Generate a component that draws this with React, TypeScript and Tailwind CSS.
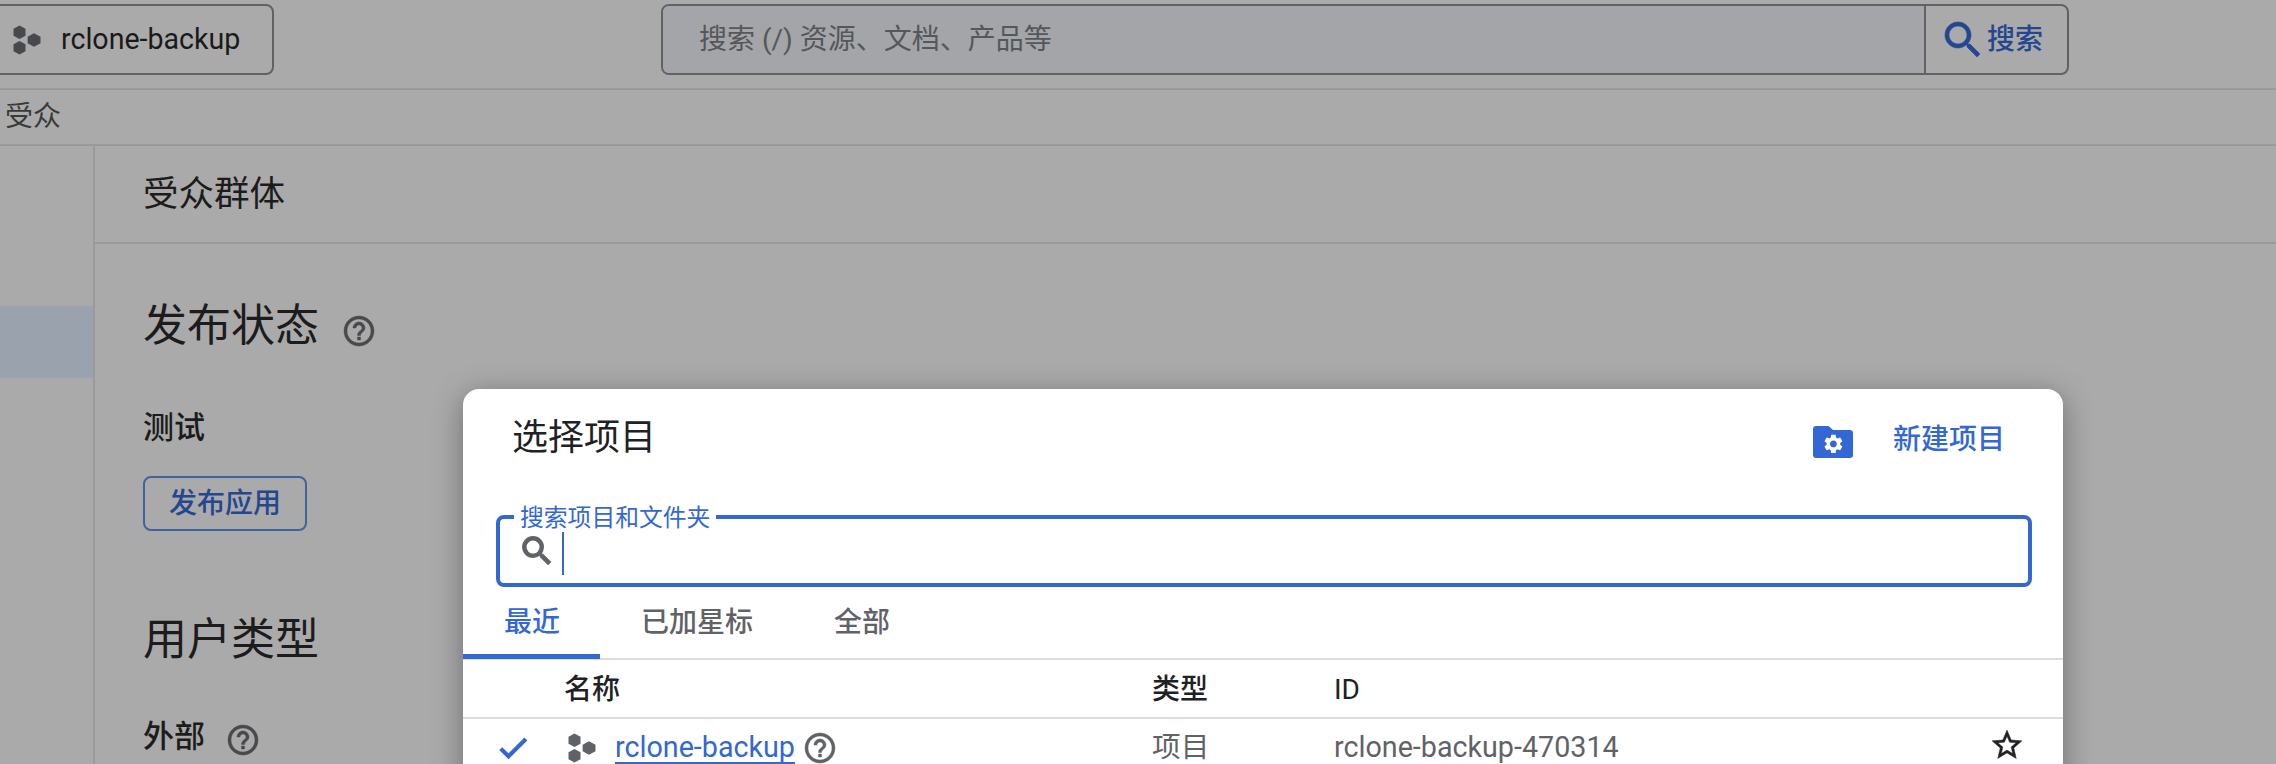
const SEARCH = "M15.5 14h-.79l-.28-.27C15.41 12.59 16 11.11 16 9.5 16 5.91 13.09 3 9.5 3S3 5.91 3 9.5 5.91 16 9.5 16c1.61 0 3.09-.59 4.23-1.57l.27.28v.79l5 4.99L20.49 19l-4.99-5zm-6 0C7.01 14 5 11.99 5 9.5S7.01 5 9.5 5 14 7.01 14 9.5 11.99 14 9.5 14z";
const HELP = "M11 18h2v-2h-2v2zm1-16C6.48 2 2 6.48 2 12s4.48 10 10 10 10-4.48 10-10S17.52 2 12 2zm0 18c-4.41 0-8-3.59-8-8s3.59-8 8-8 8 3.59 8 8-3.59 8-8 8zm0-14c-2.21 0-4 1.79-4 4h2c0-1.1.9-2 2-2s2 .9 2 2c0 2-3 1.75-3 5h2c0-2.25 3-2.5 3-5 0-2.21-1.79-4-4-4z";
const STAR = "M22 9.24l-7.19-.62L12 2 9.19 8.63 2 9.24l5.46 4.73L5.82 21 12 17.27 18.18 21l-1.63-7.03L22 9.24zM12 15.4l-3.76 2.27 1-4.28-3.32-2.88 4.38-.38L12 6.1l1.71 4.04 4.38.38-3.32 2.88 1 4.28L12 15.4z";
const CHECK = "M9 16.17L4.83 12l-1.42 1.41L9 19 21 7l-1.41-1.41z";
const GEAR = "M19.14 12.94c.04-.3.06-.61.06-.94 0-.32-.02-.64-.07-.94l2.03-1.58c.18-.14.23-.41.12-.61l-1.92-3.32c-.12-.22-.37-.29-.59-.22l-2.39.96c-.5-.38-1.03-.7-1.62-.94l-.36-2.54c-.04-.24-.24-.41-.48-.41h-3.84c-.24 0-.43.17-.47.41l-.36 2.54c-.59.24-1.13.57-1.62.94l-2.39-.96c-.22-.08-.47 0-.59.22L2.74 8.87c-.12.21-.08.47.12.61l2.03 1.58c-.05.3-.09.63-.09.94s.02.64.07.94l-2.03 1.58c-.18.14-.23.41-.12.61l1.92 3.32c.12.22.37.29.59.22l2.39-.96c.5.38 1.03.7 1.62.94l.36 2.54c.05.24.24.41.48.41h3.84c.24 0 .44-.17.47-.41l.36-2.54c.59-.24 1.13-.56 1.62-.94l2.39.96c.22.08.47 0 .59-.22l1.92-3.32c.12-.22.07-.47-.12-.61l-2.01-1.58zM12 15.6c-1.98 0-3.6-1.62-3.6-3.6s1.62-3.6 3.6-3.6 3.6 1.62 3.6 3.6-1.62 3.6-3.6 3.6z";

function Icon({ d, className, bold }: { d: string; className: string; bold?: boolean }) {
  return (
    <svg viewBox="0 0 24 24" className={className} fill="currentColor" stroke="currentColor" strokeWidth={bold ? "0.8" : "0.3"}>
      <path d={d} />
    </svg>
  );
}

function Hexes({ className }: { className: string }) {
  return (
    <svg viewBox="0 0 28 28" className={className} fill="currentColor">
      <polygon points="7,0.5 12.6,3.6 12.6,10 7,13.1 1.4,10 1.4,3.6" />
      <polygon points="7,14.9 12.6,18 12.6,24.4 7,27.5 1.4,24.4 1.4,18" />
      <polygon points="20.5,7.7 26.6,11 26.6,17 20.5,20.3 14.6,17 14.6,11" />
    </svg>
  );
}

function FolderGear() {
  return (
    <svg viewBox="0 0 40 32" className="w-[40px] h-[32px] shrink-0">
      <path fill="#3367d6" d="M3 0h12.5l4.5 4h17c1.7 0 3 1.3 3 3v22c0 1.7-1.3 3-3 3H3c-1.7 0-3-1.3-3-3V3C0 1.3 1.3 0 3 0z" />
      <g transform="translate(9 6.5) scale(0.95)">
        <path fill="#ffffff" d={GEAR} />
      </g>
    </svg>
  );
}

export default function App() {
  return (
    <div className="relative w-[2276px] h-[764px] overflow-hidden bg-[#aaaaaa] text-[#1c1c1c] font-['Roboto','Noto_Sans_CJK_SC',sans-serif]">
      <header className="h-[90px] border-b-2 border-[#9a9a9a] flex items-start pt-[4px]">
        <div className="-ml-[10px] w-[284px] h-[71px] border-2 border-[#606265] rounded-[8px] flex items-center pl-[20px] shrink-0">
          <Hexes className="w-[30px] h-[30px] text-[#47494c]" />
          <span className="ml-[19px] text-[28.6px] text-[#1a1a1a]">rclone-backup</span>
        </div>
        <div className="ml-[387px] w-[1408px] h-[71px] border-2 border-[#606265] rounded-[8px] flex overflow-hidden shrink-0">
          <div className="flex-1 bg-[#a3a5a8] flex items-center pl-[36px] text-[28px] text-[#55575a] border-r-2 border-[#606265]">
            搜索 (/) 资源、文档、产品等
          </div>
          <div className="w-[141px] flex items-center pl-[16px] text-[#25478f] text-[28px]">
            <Icon d={SEARCH} className="w-[48px] h-[48px] -ml-[3px] -mr-[3px] shrink-0" />
            <span className="ml-[3px] font-medium">搜索</span>
          </div>
        </div>
      </header>

      <div className="h-[56px] border-b-2 border-[#9a9a9a] flex items-center pl-[5px] text-[28px] text-[#3a3a3a]">
        受众
      </div>

      <div className="flex h-[618px]">
        <aside className="w-[95px] shrink-0 border-r-2 border-[#9a9a9a] pt-[160px]">
          <div className="h-[72px] bg-[#9aa2ae]" />
        </aside>
        <main className="flex-1">
          <div className="h-[98px] border-b-2 border-[#9a9a9a] flex items-center pl-[48px] pt-[2px] text-[35.5px]">
            受众群体
          </div>
          <div className="pl-[48px]">
            <div className="mt-[57px] flex items-center h-[50px]">
              <h2 className="text-[44px] leading-[50px] font-normal">发布状态</h2>
              <Icon d={HELP} className="ml-[22px] mt-[10px] w-[36px] h-[36px] text-[#47494c]" />
            </div>
            <div className="mt-[57px] text-[31px] leading-[40px] font-medium">测试</div>
            <button className="mt-[28px] w-[164px] h-[55px] border-2 border-[#40639f] rounded-[8px] text-[#25478f] text-[28px] font-medium flex items-center justify-center">
              发布应用
            </button>
            <h2 className="mt-[84px] text-[44px] leading-[50px] font-normal">用户类型</h2>
            <div className="mt-[51px] flex items-center">
              <span className="text-[31px] leading-[40px] font-medium">外部</span>
              <Icon d={HELP} className="ml-[20px] mt-[6px] w-[36px] h-[36px] text-[#47494c]" />
            </div>
          </div>
        </main>
      </div>

      <div className="absolute left-[463px] top-[389px] w-[1600px] h-[400px] bg-white rounded-[16px] shadow-[0_6px_30px_rgba(0,0,0,0.35)]">
        <div className="h-[69px] pl-[49px] pr-[58px] flex items-end justify-between">
          <div className="text-[36px] leading-[45px] text-[#202124] translate-y-[3px]">选择项目</div>
          <div className="flex items-center text-[28px] leading-[36px] text-[#3367d6] font-medium">
            <FolderGear />
            <span className="ml-[40px] -mt-[4px]">新建项目</span>
          </div>
        </div>

        <div className="relative ml-[33px] mr-[31px] mt-[57px] h-[72px] border-4 border-[#3367d6] rounded-[8px] flex items-center pl-[23px]">
          <span className="absolute left-[14px] -top-[15px] bg-white px-[6px] text-[23.8px] leading-[28px] text-[#3367d6]">
            搜索项目和文件夹
          </span>
          <Icon d={SEARCH} bold className="w-[38px] h-[38px] text-[#5f6368] -ml-[5px] shrink-0" />
          <span className="ml-[6px] w-[2px] h-[48px] bg-[#3367d6]" />
        </div>

        <div className="mt-[18px] h-[55px] border-b-2 border-[#dadce0] flex text-[28px] text-[#5f6368] font-medium">
          <div className="w-[137px] h-[55px] border-b-[5px] border-[#3367d6] text-[#3367d6] pl-[41px] -mt-[1px] leading-[38px]">最近</div>
          <div className="ml-[41px] -mt-[1px] leading-[38px]">已加星标</div>
          <div className="ml-[81px] -mt-[1px] leading-[38px]">全部</div>
        </div>

        <div className="h-[59px] border-b-2 border-[#dadce0] flex items-center text-[28px] text-[#202124] pt-[2px]">
          <div className="w-[101px]" />
          <div className="w-[588px] font-medium">名称</div>
          <div className="w-[182px] font-medium">类型</div>
          <div>ID</div>
        </div>

        <div className="h-[58px] flex items-center text-[28.7px] text-[#5f6368]">
          <div className="w-[101px] pl-[32px]">
            <Icon d={CHECK} bold className="w-[36px] h-[36px] text-[#3367d6]" />
          </div>
          <div className="w-[588px] flex items-center">
            <Hexes className="ml-[3px] w-[30px] h-[30px] text-[#5f6368]" />
            <span className="ml-[18px] text-[#3367d6] underline underline-offset-[5px] decoration-[1.5px] [text-decoration-skip-ink:none]">rclone-backup</span>
            <Icon d={HELP} className="ml-[7px] w-[36px] h-[36px]" />
          </div>
          <div className="w-[182px]">项目</div>
          <div>rclone-backup-470314</div>
          <Icon d={STAR} className="absolute left-[1526px] top-[338px] w-[36px] h-[36px] text-[#202124]" />
        </div>
      </div>
    </div>
  );
}
